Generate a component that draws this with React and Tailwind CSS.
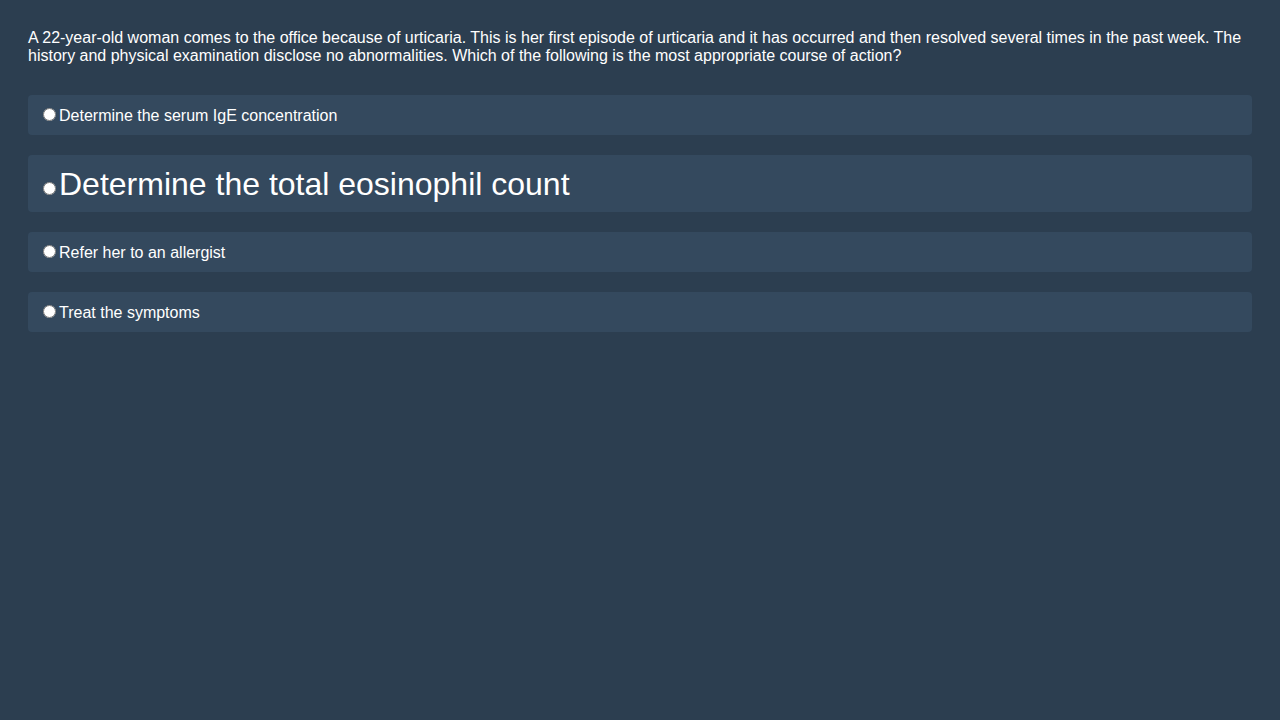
import React from "react";

const options = [
  { text: "Determine the serum IgE concentration", big: false },
  { text: "Determine the total eosinophil count", big: true },
  { text: "Refer her to an allergist", big: false },
  { text: "Treat the symptoms", big: false },
];

export default function App() {
  return (
    <div className="min-h-screen bg-[#2c3e50] px-[28px] pt-[29px] pb-[28px] font-['Liberation_Sans',Arial,sans-serif] text-white leading-[normal]">
      <p className="text-base leading-[normal] mb-[30px]">
        A 22-year-old woman comes to the office because of urticaria. This is her first episode of urticaria and it has occurred and then resolved several times in the past week. The history and physical examination disclose no abnormalities. Which of the following is the most appropriate course of action?
      </p>
      <div>
        {options.map((o, i) => (
          <label
            key={i}
            className={
              "block rounded bg-[#34495e] mb-[20px] leading-[normal] " +
              (o.big ? "text-[32px] pt-[11px] pb-[9px] px-[10px]" : "text-base p-[10px]")
            }
          >
            <input type="radio" name="answer" className="m-[3px_3px_0_5px]" />
            {o.text}
          </label>
        ))}
      </div>
    </div>
  );
}
